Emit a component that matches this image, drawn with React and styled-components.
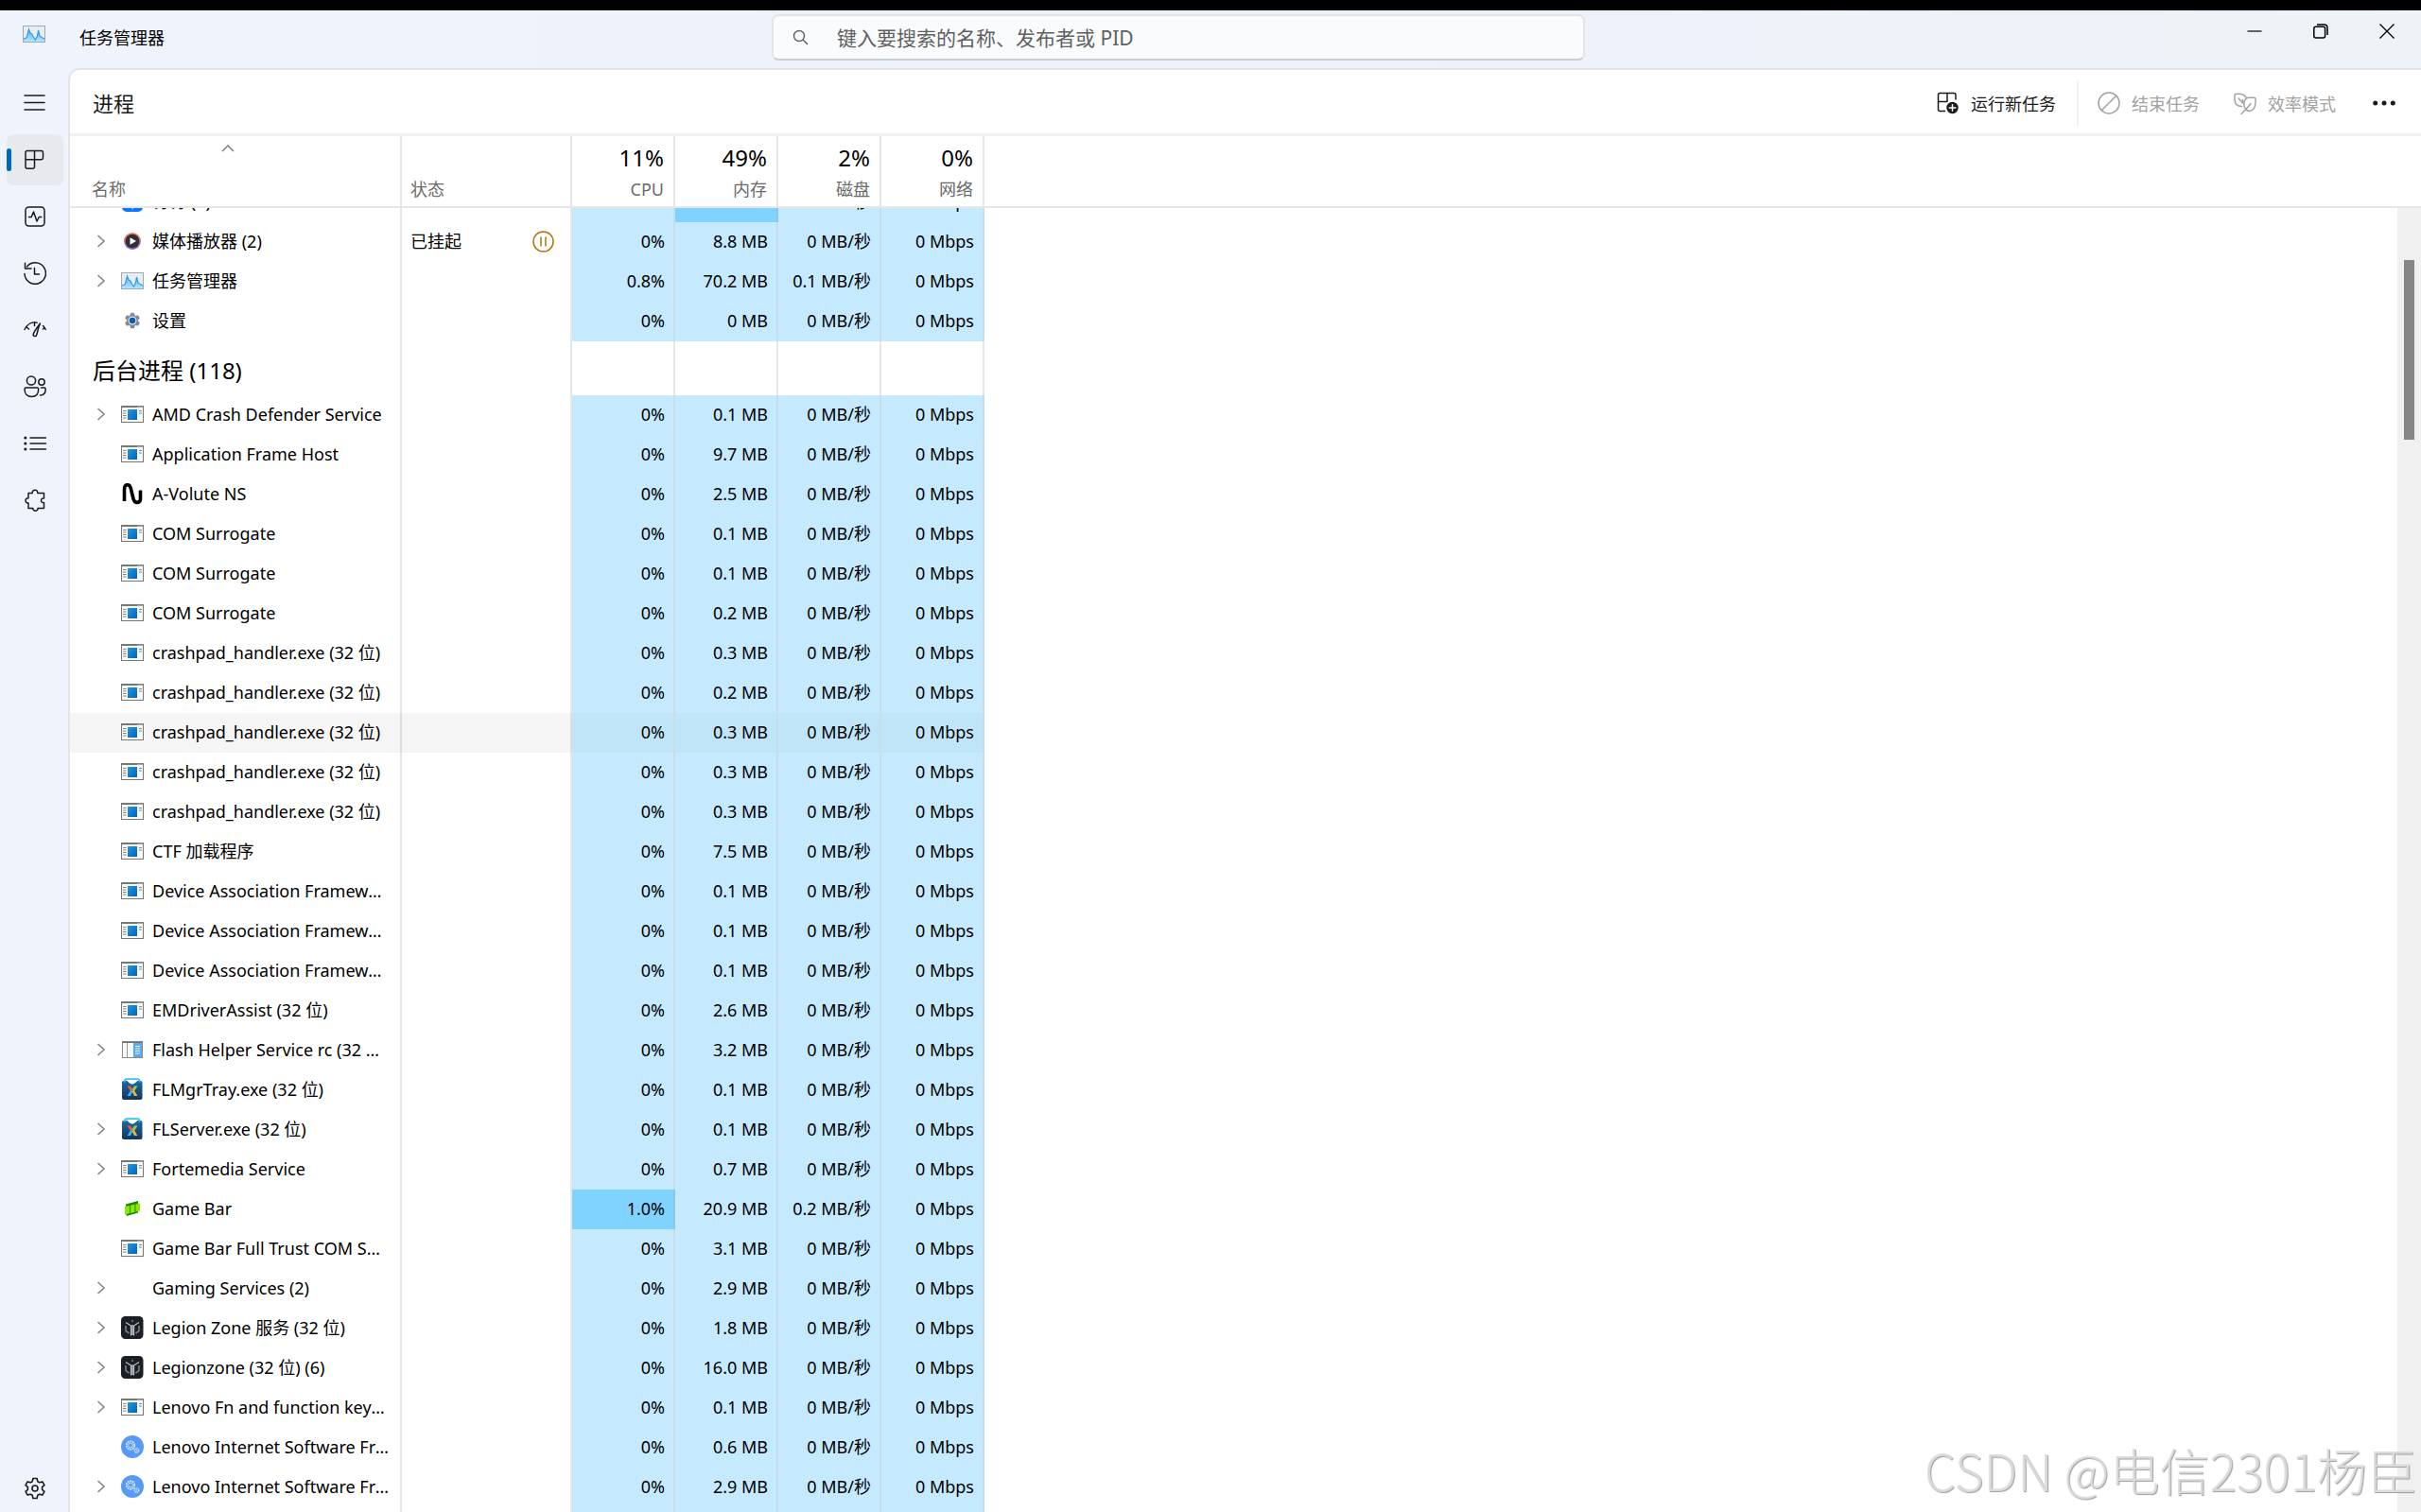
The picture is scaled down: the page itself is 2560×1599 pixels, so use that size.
import React, { useLayoutEffect, useRef } from 'react';
import styled, { createGlobalStyle, css } from 'styled-components';

const GlobalStyle = createGlobalStyle`
  * { box-sizing: border-box; }
  html, body, #root { height: 100%; }
  body {
    margin: 0;
    overflow: hidden;
    font-family: "Noto Sans", "Noto Sans CJK SC", sans-serif;
    font-size: 18px;
    color: #000;
    background: #eff2fa;
  }
  button, input { font: inherit; color: inherit; }
`;

const Window = styled.div`
  position: relative;
  height: 100vh;
  display: flex;
  flex-direction: column;
  border-top: 11px solid #000;
  background: linear-gradient(90deg, #eff3fb, #eef1fa 60%, #eef3f7);
`;

const TitleBar = styled.header`
  flex: none;
  height: 61px;
  display: grid;
  grid-template-columns: 1fr 860px 1fr;
  align-items: start;
`;

const AppName = styled.div`
  height: 56px;
  display: flex;
  align-items: center;
  gap: 36px;
  padding-left: 24px;
  svg { margin-bottom: 6px; }
`;

const SearchBox = styled.label`
  height: 49px;
  margin-top: 4px;
  margin-left: -34px;
  margin-right: 34px;
  display: flex;
  align-items: center;
  gap: 30px;
  padding: 0 22px 0 20px;
  border: 2px solid #e2e5ea;
  border-bottom-color: #c9ced4;
  border-radius: 7px;
  background: #fafbfd;
`;

const SearchInput = styled.input`
  flex: 1;
  border: 0;
  outline: 0;
  padding: 0;
  background: transparent;
  font-size: 21px;
  &::placeholder { color: #5f6062; opacity: 1; }
`;

const WindowControls = styled.div`
  display: flex;
  justify-content: flex-end;
  padding-right: 1px;
`;

const ControlButton = styled.button`
  width: 70px;
  height: 43px;
  display: grid;
  place-items: center;
  border: 0;
  padding: 0;
  background: transparent;
`;

const Main = styled.div`
  flex: 1;
  min-height: 0;
  display: flex;
`;

const Sidebar = styled.nav`
  flex: none;
  width: 72px;
  display: flex;
  flex-direction: column;
  gap: 6px;
  padding: 10px 5px 0 7px;
`;

const NavButton = styled.button`
  position: relative;
  flex: none;
  height: 54px;
  display: grid;
  place-items: center;
  border: 0;
  border-radius: 7px;
  padding: 0;
  color: #1b1b1b;
  background: ${(p) => (p.$active ? '#e7e9ef' : 'transparent')};
  ${(p) => p.$bottom && css`height: 50px; margin-top: auto;`}
  ${(p) =>
    p.$active &&
    css`
      &::before {
        content: '';
        position: absolute;
        left: 0;
        top: 15px;
        width: 5px;
        height: 24px;
        border-radius: 3px;
        background: #0067c0;
      }
    `}
`;

const Panel = styled.main`
  position: relative;
  flex: 1;
  min-width: 0;
  display: flex;
  flex-direction: column;
  border: 2px solid #e1e5ea;
  border-width: 2px 0 0 2px;
  border-top-left-radius: 12px;
  background: #fff;
  overflow: hidden;
`;

const PanelHeader = styled.div`
  flex: none;
  height: 70px;
  display: flex;
  align-items: center;
  justify-content: space-between;
  padding: 2px 18px 0 24px;
  border-bottom: 3px solid #f0f0f0;
`;

const PageTitle = styled.h1`
  margin: 0;
  font-size: 22px;
  font-weight: 400;
  line-height: 30px;
  color: #1b1b1b;
`;

const Toolbar = styled.div`
  display: flex;
  align-items: center;
`;

const ToolButton = styled.button`
  height: 48px;
  display: flex;
  align-items: center;
  gap: 12px;
  border: 0;
  padding: 0 22px 0 14px;
  color: ${(p) => (p.disabled ? '#a2a2a2' : '#1b1b1b')};
  background: transparent;
`;

const MoreButton = styled(ToolButton)`
  padding: 0 9px 0 17px;
`;

const Divider = styled.span`
  width: 2px;
  height: 48px;
  margin-right: 6px;
  background: #f0f0f0;
`;

const Scroller = styled.div`
  flex: 1;
  min-height: 0;
  overflow-y: auto;
  scrollbar-width: none;
`;

const Table = styled.table`
  width: 100%;
  table-layout: fixed;
  border-collapse: separate;
  border-spacing: 0;
`;

const HeadCell = styled.th`
  position: sticky;
  top: 0;
  z-index: 1;
  height: 76px;
  padding: 5px 10px 5px 23px;
  vertical-align: bottom;
  text-align: ${(p) => (p.$numeric ? 'right' : 'left')};
  font-weight: 400;
  line-height: 26px;
  color: #6b6b6b;
  background: #fff;
  border-bottom: 2px solid #e6e6e6;
  border-right: ${(p) => (p.$last ? 0 : '2px solid #e6e6e6')};
  ${(p) => p.$status && css`padding-left: 9px;`}
`;

const SortMark = styled.div`
  height: 34px;
  padding-right: 28px;
  svg { display: block; margin: 0 auto; }
`;

const Total = styled.div`
  padding-bottom: 3px;
  font-size: 24px;
  line-height: 34px;
  color: #000;
`;

const Cell = styled.td`
  height: 42px;
  padding: 0 0 2px;
  line-height: 26px;
  background: ${(p) => (p.$hover ? '#f5f5f5' : '#fff')};
  border-right: 2px solid ${(p) => (p.$hover ? '#dddddd' : '#e6e6e6')};
`;

const FillCell = styled.td`
  padding: 0;
`;

const heat = { base: '#c5e9fe', hover: '#c0e5f8', high: '#80d2ff' };

const ValueCell = styled(Cell)`
  padding-right: 9px;
  text-align: right;
  white-space: nowrap;
  background: ${(p) => heat[p.$level]};
  border-right-color: ${(p) => (p.$level === 'high' ? '#8cc6e8' : '#c8dce9')};
`;

const GroupCell = styled(Cell)`
  height: 57px;
  padding: 4px 0 0 24px;
  font-size: 24px;
  line-height: 34px;
  text-align: left;
  font-weight: 400;
  white-space: nowrap;
`;

const NameLine = styled.div`
  display: grid;
  grid-template-columns: 28px 24px 1fr;
  align-items: center;
  padding: 0 12px 0 26px;
`;

const ExpandButton = styled.button`
  width: 14px;
  height: 26px;
  display: grid;
  place-items: center;
  border: 0;
  padding: 0;
  background: transparent;
`;

const NameText = styled.span`
  grid-column: 3;
  padding-left: 9px;
  overflow: hidden;
  white-space: nowrap;
  text-overflow: ellipsis;
`;

const IconSlot = styled.span`
  grid-column: 2;
  height: 24px;
  display: grid;
  place-items: center;
`;

const StatusLine = styled.div`
  display: flex;
  align-items: center;
  justify-content: space-between;
  padding: 0 17px 0 9px;
`;

const ScrollTrack = styled.div`
  position: absolute;
  top: 146px;
  right: 0;
  bottom: 0;
  width: 25px;
  padding: 55px 7px 0;
  background: #f0f0f0;
`;

const ScrollThumb = styled.div`
  height: 190px;
  background: #868686;
`;

const Watermark = styled.div`
  position: absolute;
  right: 4px;
  bottom: 10px;
  font-family: "Noto Sans CJK SC", sans-serif;
  font-size: 53px;
  font-weight: 300;
  line-height: 70px;
  color: rgba(222, 222, 222, 0.9);
  text-shadow: 1px 1px 1px rgba(120, 120, 120, 0.7);
  pointer-events: none;
`;

const Line = ({ size = 24, width = 1.5, children }) => (
  <svg width={size} height={size} viewBox="0 0 24 24" fill="none" stroke="currentColor" strokeWidth={width} strokeLinecap="round" strokeLinejoin="round" aria-hidden="true">
    {children}
  </svg>
);

const TaskManagerIcon = () => (
  <svg width="24" height="18" viewBox="0 0 24 18" aria-hidden="true">
    <defs>
      <linearGradient id="tm" x1="0" y1="0" x2="0" y2="1">
        <stop offset="0" stopColor="#4fb2f2" />
        <stop offset="1" stopColor="#b5e7fd" />
      </linearGradient>
    </defs>
    <rect x="0.5" y="0.5" width="23" height="17" fill="#e9edf2" stroke="#9fa9b2" />
    <path d="M1 14 C3 14 4 13 4.500 12 L6.500 4 L8 8 L9.500 8.500 L12 13.500 L13.500 15 L15.500 11 L16.500 5 L18 11 L20 12.500 L23 14 V17 H1Z" fill="url(#tm)" />
    <path d="M1 14 C3 14 4 13 4.500 12 L6.500 4 L8 8 L9.500 8.500 L12 13.500 L13.500 15 L15.500 11 L16.500 5 L18 11 L20 12.500 L23 14" fill="none" stroke="#2f9ce6" strokeWidth="1.200" />
  </svg>
);

const WindowAppIcon = () => (
  <svg width="24" height="18" viewBox="0 0 24 18" aria-hidden="true">
    <defs>
      <linearGradient id="wa" x1="0" y1="0" x2="1" y2="1">
        <stop offset="0" stopColor="#1c9be6" />
        <stop offset="1" stopColor="#0463b5" />
      </linearGradient>
    </defs>
    <rect x="0.500" y="0.500" width="23" height="17" fill="#fafafa" stroke="#777" />
    <path d="M0 1.200H24" stroke="#777" strokeWidth="1.600" />
    <path d="M17.500 1.300h1M19.500 1.300h1M21.500 1.300h1" stroke="#eee" />
    <path d="M2 5.500h3.500M2 8h3.500M2 10.500h3.500M2 13h3.500M19 5.500h3M19 8h3" stroke="#777" strokeWidth="0.900" />
    <rect x="7" y="4" width="10" height="11" fill="url(#wa)" />
  </svg>
);

const FlashIcon = () => (
  <svg width="24" height="18" viewBox="0 0 24 18" aria-hidden="true">
    <rect x="1.500" y="0.500" width="21" height="17" fill="#fafafa" stroke="#888" />
    <path d="M1 1.200H23" stroke="#777" strokeWidth="1.600" />
    <path d="M6.500 2V17" stroke="#999" />
    <rect x="13" y="2" width="9" height="15" fill="#5aaaf0" />
    <path d="M15 5.500h5M15 8h5M15 10.500h5M15 13h5" stroke="#fff" strokeWidth="0.900" />
  </svg>
);

const MediaIcon = () => (
  <svg width="18" height="18" viewBox="0 0 18 18" aria-hidden="true">
    <defs>
      <linearGradient id="mp" x1="0" y1="0" x2="0" y2="1">
        <stop offset="0" stopColor="#f08040" />
        <stop offset="1" stopColor="#9058c8" />
      </linearGradient>
    </defs>
    <circle cx="9" cy="9" r="9" fill="url(#mp)" />
    <circle cx="9" cy="9" r="7.300" fill="#2f2f35" />
    <path d="M6.500 5.200L13 9l-6.500 3.800Z" fill="#fff" />
  </svg>
);

const gearPath =
  'M9.900 1.500h4.200l.7 3.200 2 1.150 3.050-.95 2.100 3.650-2.350 2.150v2.600l2.350 2.150-2.100 3.650-3.050-.95-2 1.150-.7 3.200H9.900l-.7-3.200-2-1.150-3.050.95-2.100-3.650L4.400 13.300V10.700L2.050 8.550l2.100-3.650 3.050.95 2-1.150Z';

const SettingsAppIcon = () => (
  <svg width="18" height="18" viewBox="0 0 24 24" aria-hidden="true">
    <path d={gearPath} fill="#7d8894" stroke="#7d8894" strokeLinejoin="round" />
    <circle cx="12" cy="12" r="6" fill="#dfe9f2" />
    <circle cx="12" cy="12" r="4.400" fill="#0f5cad" />
  </svg>
);

const AVoluteIcon = () => (
  <svg width="24" height="24" viewBox="0 0 24 24" aria-hidden="true">
    <path d="M3.500 20V7.500C3.500 1.500 8.800 1.500 10.200 6L13 17.500C14.500 23 20.500 22.500 20.500 17V8.500" fill="none" stroke="#000" strokeWidth="3.600" />
  </svg>
);

const BoxIcon = () => (
  <svg width="24" height="24" viewBox="0 0 24 24" aria-hidden="true">
    <defs>
      <linearGradient id="bx" x1="0" y1="0" x2="0" y2="1">
        <stop offset="0" stopColor="#1d6aa8" />
        <stop offset="1" stopColor="#103560" />
      </linearGradient>
    </defs>
    <rect x="1" y="3" width="21.500" height="20" rx="2" fill="url(#bx)" />
    <path d="M6.500 3H17.500L14.500 5.500l-2.700 1.200L9 5.500Z" fill="#fff" />
    <path d="M4 4.500V3q0-1.800 2-1.800H17.500q2 0 2 1.800v1.500" fill="none" stroke="#35c3f5" strokeWidth="1.700" />
    <path d="M6.500 8.500h3.500l2.500 4-2.500 1.500Z" fill="#f4582e" />
    <path d="M17.500 8.500H14l-2.500 4 2.500 1.500Z" fill="#8fd24a" />
    <path d="M6.500 19h3.500l2.500-5-2-1.500Z" fill="#3ab4f0" />
    <path d="M17.500 19H14l-2.500-5 2-1.500Z" fill="#f5b52a" />
  </svg>
);

const GameBarIcon = () => (
  <svg width="18" height="18" viewBox="0 0 18 18" aria-hidden="true">
    <path d="M2 4.500L15 1V5L2 8Z" fill="#138a13" />
    <path d="M2 14L15 10.500V13.500L3 17Z" fill="#138a13" />
    <path d="M1 7L17 3.500V11.500L1 15.500Z" fill="#8fe600" />
    <path d="M6.500 5.500V14M12 4.500V13" stroke="#259a12" strokeWidth="1.200" />
  </svg>
);

const LegionIcon = () => (
  <svg width="24" height="24" viewBox="0 0 24 24" aria-hidden="true">
    <rect width="23.500" height="24" rx="4.500" fill="#1b1e25" />
    <path d="M5 6.500L10.500 10V20.500M19 6.500L13.500 10V20.500M12 9V20" fill="none" stroke="#b9bcc2" strokeWidth="1.300" />
    <path d="M5 10V15.500l3.500 2.500M19 10V15.500l-3.500 2.500" fill="none" stroke="#74787f" strokeWidth="1.700" />
    <circle cx="12" cy="5" r="1.200" fill="#62666d" />
  </svg>
);

const LenovoIcon = () => (
  <svg width="24" height="24" viewBox="0 0 24 24" aria-hidden="true">
    <circle cx="12" cy="12" r="12" fill="#5799f8" />
    <g fill="none" stroke="#d2e4fd">
      <circle cx="10" cy="10.500" r="4.300" strokeWidth="1.700" strokeDasharray="2 0.700" />
      <circle cx="10" cy="10.500" r="2.400" strokeWidth="0.900" />
      <circle cx="16.500" cy="16" r="2.300" strokeWidth="1.300" strokeDasharray="1.400 0.500" />
      <circle cx="16.500" cy="16" r="0.700" strokeWidth="0.700" />
    </g>
  </svg>
);

const DingIcon = () => (
  <svg width="22" height="24" viewBox="0 0 22 24" aria-hidden="true">
    <rect y="1" width="22" height="22" rx="5" fill="#0b77fb" />
    <path d="M6 6l10 5-2.500 4h2l-5 6 1-4.500H9.500L11 14Z" fill="#fff" />
  </svg>
);

const icons = {
  app: WindowAppIcon,
  flash: FlashIcon,
  media: MediaIcon,
  tm: TaskManagerIcon,
  settings: SettingsAppIcon,
  avolute: AVoluteIcon,
  box: BoxIcon,
  game: GameBarIcon,
  legion: LegionIcon,
  lenovo: LenovoIcon,
  ding: DingIcon,
};

const navItems = [
  {
    label: '打开导航',
    icon: <Line><path d="M1 4h21M1 11.500h21M1 19h21" /></Line>,
  },
  {
    label: '进程',
    active: true,
    icon: <Line><path d="M2 4.200q0-1.700 1.700-1.700H18.800q1.700 0 1.700 1.700V10q0 1.700-1.700 1.700H11.500V19.500q0 1.700-1.700 1.700H3.700q-1.700 0-1.700-1.700ZM11.500 2.500V11.700H2" /></Line>,
  },
  {
    label: '性能',
    icon: <Line><rect x="2" y="2" width="20" height="20" rx="3.500" /><path d="M5.500 12.500h2.700l2.300-5.500 3.500 10 2.300-4.500h2.500" /></Line>,
  },
  {
    label: '应用历史记录',
    icon: <Line><path d="M1 12.500A11.200 11.200 0 1 0 3.500 5M1.500 1.200V7h6.500M11.500 6.500V13h5" /></Line>,
  },
  {
    label: '启动应用',
    icon: <Line><path d="M1 11.500C4.500 4.500 10 3.200 14 4.200M2.500 8.500l3 2.500M11.500 4v3.500M20.500 7.500Q22 9 23.200 11.500M20.500 11l1.500-1.500M17.500 5Q15.500 9 14 16.500C13.500 19.500 9.700 19 10.200 16.500Q11 13.500 17.500 5Z" /></Line>,
  },
  {
    label: '用户',
    icon: <Line><circle cx="8" cy="5.500" r="4.600" /><circle cx="19" cy="7" r="3.200" /><path d="M2.500 13h11.700q1.500 0 1.500 1.500c0 5-2.700 8-7.200 8S1 19.500 1 14.500Q1 13 2.500 13ZM18.500 13h3.200q1.500 0 1.500 1.500c0 4-2 6.500-5.700 6.500" /></Line>,
  },
  {
    label: '详细信息',
    icon: <Line><path d="M7 6h16.500M7 12h16.500M7 18h16.500" /><path d="M1.800 6h.1M1.800 12h.1M1.800 18h.1" strokeWidth="3" /></Line>,
  },
  {
    label: '服务',
    icon: <Line><path d="M5 4.500h4.200c-.5-4.500 6.100-4.500 5.600 0H21.500V10c-4-.8-4 5.300 0 4.600V20.500H15c.5 3.500-5.500 3.500-5.200 0H5V15C1 15.500 1 9.200 5 9.800Z" /></Line>,
  },
];

const rows = [
  ['ding', '钉钉 (4)', 1, '0%', '307.5 MB', '0 MB/秒', '0 Mbps', { mem: 'high' }],
  ['media', '媒体播放器 (2)', 1, '0%', '8.8 MB', '0 MB/秒', '0 Mbps', { status: '已挂起' }],
  ['tm', '任务管理器', 1, '0.8%', '70.2 MB', '0.1 MB/秒', '0 Mbps'],
  ['settings', '设置', 0, '0%', '0 MB', '0 MB/秒', '0 Mbps'],
  { group: '后台进程 (118)' },
  ['app', 'AMD Crash Defender Service', 1, '0%', '0.1 MB', '0 MB/秒', '0 Mbps'],
  ['app', 'Application Frame Host', 0, '0%', '9.7 MB', '0 MB/秒', '0 Mbps'],
  ['avolute', 'A-Volute NS', 0, '0%', '2.5 MB', '0 MB/秒', '0 Mbps'],
  ['app', 'COM Surrogate', 0, '0%', '0.1 MB', '0 MB/秒', '0 Mbps'],
  ['app', 'COM Surrogate', 0, '0%', '0.1 MB', '0 MB/秒', '0 Mbps'],
  ['app', 'COM Surrogate', 0, '0%', '0.2 MB', '0 MB/秒', '0 Mbps'],
  ['app', 'crashpad_handler.exe (32 位)', 0, '0%', '0.3 MB', '0 MB/秒', '0 Mbps'],
  ['app', 'crashpad_handler.exe (32 位)', 0, '0%', '0.2 MB', '0 MB/秒', '0 Mbps'],
  ['app', 'crashpad_handler.exe (32 位)', 0, '0%', '0.3 MB', '0 MB/秒', '0 Mbps', { hover: true }],
  ['app', 'crashpad_handler.exe (32 位)', 0, '0%', '0.3 MB', '0 MB/秒', '0 Mbps'],
  ['app', 'crashpad_handler.exe (32 位)', 0, '0%', '0.3 MB', '0 MB/秒', '0 Mbps'],
  ['app', 'CTF 加载程序', 0, '0%', '7.5 MB', '0 MB/秒', '0 Mbps'],
  ['app', 'Device Association Framework Provider Host', 0, '0%', '0.1 MB', '0 MB/秒', '0 Mbps'],
  ['app', 'Device Association Framework Provider Host', 0, '0%', '0.1 MB', '0 MB/秒', '0 Mbps'],
  ['app', 'Device Association Framework Provider Host', 0, '0%', '0.1 MB', '0 MB/秒', '0 Mbps'],
  ['app', 'EMDriverAssist (32 位)', 0, '0%', '2.6 MB', '0 MB/秒', '0 Mbps'],
  ['flash', 'Flash Helper Service rc (32 位) (2)', 1, '0%', '3.2 MB', '0 MB/秒', '0 Mbps'],
  ['box', 'FLMgrTray.exe (32 位)', 0, '0%', '0.1 MB', '0 MB/秒', '0 Mbps'],
  ['box', 'FLServer.exe (32 位)', 1, '0%', '0.1 MB', '0 MB/秒', '0 Mbps'],
  ['app', 'Fortemedia Service', 1, '0%', '0.7 MB', '0 MB/秒', '0 Mbps'],
  ['game', 'Game Bar', 0, '1.0%', '20.9 MB', '0.2 MB/秒', '0 Mbps', { cpu: 'high' }],
  ['app', 'Game Bar Full Trust COM Server', 0, '0%', '3.1 MB', '0 MB/秒', '0 Mbps'],
  [null, 'Gaming Services (2)', 1, '0%', '2.9 MB', '0 MB/秒', '0 Mbps'],
  ['legion', 'Legion Zone 服务 (32 位)', 1, '0%', '1.8 MB', '0 MB/秒', '0 Mbps'],
  ['legion', 'Legionzone (32 位) (6)', 1, '0%', '16.0 MB', '0 MB/秒', '0 Mbps'],
  ['app', 'Lenovo Fn and function keys service', 1, '0%', '0.1 MB', '0 MB/秒', '0 Mbps'],
  ['lenovo', 'Lenovo Internet Software Framework', 0, '0%', '0.6 MB', '0 MB/秒', '0 Mbps'],
  ['lenovo', 'Lenovo Internet Software Framework', 1, '0%', '2.9 MB', '0 MB/秒', '0 Mbps'],
  [null, '', 0, '', '', '', ''],
];

function ProcessRow({ row }) {
  const [icon, name, expandable, cpu, mem, disk, net, extra = {}] = row;
  const Icon = icons[icon];
  const base = extra.hover ? 'hover' : 'base';
  return (
    <tr>
      <Cell $hover={extra.hover}>
        <NameLine>
          {expandable ? (
            <ExpandButton aria-label="展开">
              <svg width="10" height="14" viewBox="0 0 10 14" fill="none" stroke="#8a8a8a" strokeWidth="1.700" aria-hidden="true">
                <path d="M1.500 1l6.500 6-6.500 6" />
              </svg>
            </ExpandButton>
          ) : null}
          <IconSlot>{Icon ? <Icon /> : null}</IconSlot>
          <NameText>{name}</NameText>
        </NameLine>
      </Cell>
      <Cell $hover={extra.hover}>
        {extra.status ? (
          <StatusLine>
            {extra.status}
            <svg width="23" height="23" viewBox="0 0 23 23" fill="none" stroke="#b4700c" strokeWidth="1.500" aria-hidden="true">
              <circle cx="11.500" cy="11.500" r="10.500" />
              <path d="M9 6.500v10M14 6.500v10" />
            </svg>
          </StatusLine>
        ) : null}
      </Cell>
      <ValueCell $level={extra.cpu || base}>{cpu}</ValueCell>
      <ValueCell $level={extra.mem || base}>{mem}</ValueCell>
      <ValueCell $level={base}>{disk}</ValueCell>
      <ValueCell $level={base}>{net}</ValueCell>
      <FillCell />
    </tr>
  );
}

function GroupRow({ title }) {
  return (
    <tr>
      <GroupCell as="th" scope="rowgroup">{title}</GroupCell>
      <Cell />
      <Cell />
      <Cell />
      <Cell />
      <Cell />
      <FillCell />
    </tr>
  );
}

const totals = [
  ['11%', 'CPU'],
  ['49%', '内存'],
  ['2%', '磁盘'],
  ['0%', '网络'],
];

export default function App() {
  const scroller = useRef(null);

  useLayoutEffect(() => {
    scroller.current.scrollTop = 27;
  }, []);

  return (
    <>
      <GlobalStyle />
      <Window>
        <TitleBar>
          <AppName>
            <TaskManagerIcon />
            <span>任务管理器</span>
          </AppName>
          <SearchBox>
            <svg width="17" height="17" viewBox="0 0 17 17" fill="none" stroke="#5f6062" strokeWidth="1.400" aria-hidden="true">
              <circle cx="7" cy="7" r="5.500" />
              <path d="M11 11l5 5" />
            </svg>
            <SearchInput type="text" aria-label="搜索" placeholder="键入要搜索的名称、发布者或 PID" />
          </SearchBox>
          <WindowControls>
            <ControlButton aria-label="最小化">
              <svg width="16" height="16" viewBox="0 0 16 16" stroke="#000" strokeWidth="1.200"><path d="M0.500 8h15" /></svg>
            </ControlButton>
            <ControlButton aria-label="还原">
              <svg width="16" height="16" viewBox="0 0 16 16" fill="none" stroke="#000" strokeWidth="1.500">
                <rect x="0.800" y="3.300" width="11.800" height="11.800" rx="2" />
                <path d="M4 1h7.500q3.500 0 3.500 3.500V12" />
              </svg>
            </ControlButton>
            <ControlButton aria-label="关闭">
              <svg width="16" height="16" viewBox="0 0 16 16" stroke="#000" strokeWidth="1.300"><path d="M0.500 0.500l15 15M15.500 0.500l-15 15" /></svg>
            </ControlButton>
          </WindowControls>
        </TitleBar>
        <Main>
          <Sidebar aria-label="导航">
            {navItems.map((item) => (
              <NavButton key={item.label} $active={item.active} aria-label={item.label}>
                {item.icon}
              </NavButton>
            ))}
            <NavButton $bottom aria-label="设置">
              <Line width={1.600}><path d={gearPath} /><circle cx="12" cy="12" r="3" /></Line>
            </NavButton>
          </Sidebar>
          <Panel>
            <PanelHeader>
              <PageTitle>进程</PageTitle>
              <Toolbar>
                <ToolButton>
                  <Line>
                    <path d="M8.500 20.500H3.200q-1.700 0-1.700-1.700V3.200q0-1.700 1.700-1.700H18.300q1.700 0 1.700 1.700V8M11 1.500V10.500H1.500" />
                    <circle cx="16.500" cy="17" r="6.200" fill="currentColor" stroke="none" />
                    <path d="M16.500 13.700v6.600M13.200 17h6.600" stroke="#fff" />
                  </Line>
                  运行新任务
                </ToolButton>
                <Divider />
                <ToolButton disabled>
                  <Line><circle cx="12" cy="12" r="11" /><path d="M4.500 19.500L19.500 4.500" /></Line>
                  结束任务
                </ToolButton>
                <ToolButton disabled>
                  <Line>
                    <path d="M8.500 15.500C3 15.500 1 12.500 1 8V3.500q0-1 1-1C6 2 10.500 2 13 6M5 7l4.500 5V8.500" />
                    <path d="M13 18.500C9.500 16 10 6.500 16 6.200H21.500q1.500 0 1.500 1.500C23.500 16 21.500 20.500 15.500 20.500Q14 20 13 18.500L18 12.500M13 18.500L8 23.500" />
                  </Line>
                  效率模式
                </ToolButton>
                <MoreButton aria-label="更多">
                  <svg width="24" height="6" viewBox="0 0 24 6" fill="#1b1b1b"><circle cx="2.700" cy="3" r="2.500" /><circle cx="12" cy="3" r="2.500" /><circle cx="21.300" cy="3" r="2.500" /></svg>
                </MoreButton>
              </Toolbar>
            </PanelHeader>
            <Scroller ref={scroller}>
              <Table>
                <colgroup>
                  <col width="351" />
                  <col width="180" />
                  <col width="109" />
                  <col width="109" />
                  <col width="109" />
                  <col width="109" />
                  <col />
                </colgroup>
                <thead>
                  <tr>
                    <HeadCell scope="col" aria-sort="ascending">
                      <SortMark>
                        <svg width="14" height="8" viewBox="0 0 14 8" fill="none" stroke="#777" strokeWidth="1.400"><path d="M1 7l6-6 6 6" /></svg>
                      </SortMark>
                      名称
                    </HeadCell>
                    <HeadCell scope="col" $status>状态</HeadCell>
                    {totals.map(([total, label]) => (
                      <HeadCell key={label} scope="col" $numeric>
                        <Total>{total}</Total>
                        {label}
                      </HeadCell>
                    ))}
                    <HeadCell as="td" $last />
                  </tr>
                </thead>
                <tbody>
                  {rows.map((row, i) => (row.group ? <GroupRow key={i} title={row.group} /> : <ProcessRow key={i} row={row} />))}
                </tbody>
              </Table>
            </Scroller>
            <ScrollTrack><ScrollThumb /></ScrollTrack>
          </Panel>
        </Main>
        <Watermark>CSDN @电信2301杨臣</Watermark>
      </Window>
    </>
  );
}
